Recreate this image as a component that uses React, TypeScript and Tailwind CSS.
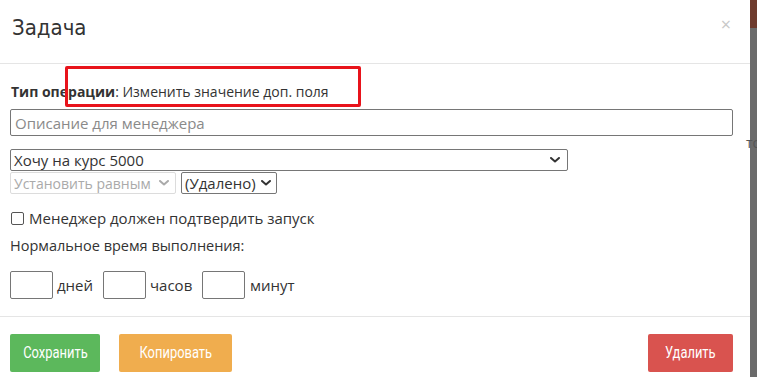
import React from 'react';

const Chevron = ({ className = '' }: { className?: string }) => (
  <svg viewBox="0 0 10 6" className={`w-[10px] h-[6px] shrink-0 ${className}`} fill="none">
    <path d="M1 1l4 3.5L9 1" stroke="currentColor" strokeWidth="2" strokeLinecap="round" strokeLinejoin="round" />
  </svg>
);

const SmallBox = () => <div className="w-[43px] h-[28px] border border-[#767676] rounded-[2px] bg-white" />;

const BtnText = ({ children }: { children: React.ReactNode }) => (
  <span className="inline-block scale-x-[0.76] font-['Roboto',sans-serif] font-normal text-[17px] whitespace-nowrap">
    {children}
  </span>
);

const App = () => {
  return (
    <div className="flex w-[757px] h-[377px] overflow-hidden bg-white text-[#333] font-['Open_Sans',sans-serif]">
      {/* Modal */}
      <div className="relative w-[750px] h-full flex flex-col bg-white">
        {/* Header */}
        <div className="h-[64px] border-b border-[#e5e5e5] flex items-start justify-between px-[12px] pt-[14px]">
          <h4 className="text-[22px] leading-[28px] font-light text-[#333] font-['Liberation_Sans_Narrow','DejaVu_Sans_Condensed',sans-serif]">
            Задача
          </h4>
          <span className="text-[18px] leading-[14px] text-[#c8c8c8] mr-[7px] mt-[3px]">×</span>
        </div>

        {/* Body */}
        <div className="px-[10px] pt-[18px] pb-[17px] text-[14px] border-b border-[#e5e5e5]">
          <div className="h-[20px] leading-[20px] pl-[1px]">
            <b className="font-bold">Тип операции</b>: Изменить значение доп. поля
          </div>

          <input
            placeholder="Описание для менеджера"
            className="mt-[7px] block w-[723px] h-[27px] border border-[#767676] rounded-[2px] px-[4px] text-[15px] placeholder:text-[#8a8a8a] outline-none"
          />

          <div className="mt-[13px] w-[558px] h-[22px] border border-[#767676] rounded-[2px] flex items-center justify-between pl-[3px] pr-[7px] text-[15px]">
            <span>Хочу на курс 5000</span>
            <Chevron className="text-[#333]" />
          </div>

          <div className="mt-[1px] flex gap-[5px]">
            <div className="w-[166px] h-[22px] border border-[#dcdcdc] rounded-[2px] flex items-center justify-between pl-[3px] pr-[6px] text-[14px] text-[#aaa] whitespace-nowrap">
              <span>Установить равным</span>
              <Chevron className="text-[#aaa]" />
            </div>
            <div className="w-[96px] h-[22px] border border-[#767676] rounded-[2px] flex items-center justify-between pl-[3px] pr-[5px] text-[15px] whitespace-nowrap">
              <span>(Удалено)</span>
              <Chevron className="text-[#333]" />
            </div>
          </div>

          <label className="mt-[14px] h-[20px] flex items-center gap-[5px] text-[15px] pl-[1px]">
            <span className="w-[13px] h-[13px] border border-[#555] rounded-[2px] bg-white" />
            Менеджер должен подтвердить запуск
          </label>

          <div className="mt-[8px] h-[20px] leading-[20px] text-[14.5px]">Нормальное время выполнения:</div>

          <div className="mt-[15px] flex items-center text-[15px]">
            <SmallBox />
            <span className="ml-[4px] w-[46px]">дней</span>
            <SmallBox />
            <span className="ml-[4px] w-[52px]">часов</span>
            <SmallBox />
            <span className="ml-[5px]">минут</span>
          </div>
        </div>

        {/* Footer */}
        <div className="flex items-start justify-between px-[10px] pt-[17px] text-white">
          <div className="flex gap-[19px]">
            <button className="w-[90px] h-[38px] bg-[#5cb85c] rounded-[2px] flex items-center justify-center">
              <BtnText>Сохранить</BtnText>
            </button>
            <button className="w-[113px] h-[38px] bg-[#f0ad4e] rounded-[2px] flex items-center justify-center">
              <BtnText>Копировать</BtnText>
            </button>
          </div>
          <button className="w-[85px] h-[38px] bg-[#d9534f] rounded-[2px] mr-[7px] flex items-center justify-center">
            <BtnText>Удалить</BtnText>
          </button>
        </div>

        {/* Annotation frame */}
        <div className="absolute left-[65px] top-[66px] w-[296px] h-[41px] border-[3px] border-[#e8131b] rounded-[2px] pointer-events-none" />
      </div>

      {/* Backdrop strip */}
      <div className="relative w-[7px] h-full flex flex-col bg-[#6b6b6b]">
        <div className="h-[28px] bg-[#6e3b2e]" />
        <span className="absolute left-[-4px] top-[132px] text-[14px] text-[#555]">то</span>
      </div>
    </div>
  );
};

export default App;
